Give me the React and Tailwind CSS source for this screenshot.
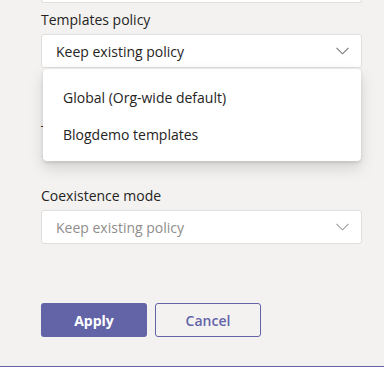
import React from "react";

const font = { fontFamily: '"Open Sans", "Noto Sans", sans-serif' };

function Chevron({ color }) {
  return (
    <svg width="13" height="8" viewBox="0 0 13 8" fill="none">
      <path d="M0.5 0.8 L6.5 6.8 L12.5 0.8" stroke={color} strokeWidth="1.1" />
    </svg>
  );
}

function Select({ value, placeholder, chevron }) {
  return (
    <div className="flex h-[34px] items-center justify-between rounded-[3px] border border-[#e1dfdd] bg-white pl-[14px] pr-[12px]">
      <span className={placeholder ? "text-[14px] text-[#8f8d8b]" : "text-[14px] text-[#252423]"}>{value}</span>
      <Chevron color={chevron} />
    </div>
  );
}

export default function App() {
  return (
    <div className="relative h-[367px] w-[384px] overflow-hidden bg-[#f3f2f1]" style={font}>
      <div className="ml-[41px] w-[321px]">
        {/* bottom of the field above */}
        <div className="h-[3px] rounded-b-[3px] border-x border-b border-[#e1dfdd] bg-white" />

        <div className="relative pt-[7px]">
          <div className="h-[20px] text-[14px] leading-[20px] text-[#252423]">Templates policy</div>
          <div className="mt-[4px]">
            <Select value="Keep existing policy" chevron="#797775" />
          </div>

          {/* field hidden behind the open menu */}
          <div className="mt-[53px] h-[20px] text-[14px] leading-[20px] text-[#252423]">Teams policy</div>
          <div className="h-[16px] border-b border-[#e1dfdd]" />

          {/* open menu */}
          <div className="absolute left-[2px] right-[1px] top-[66px] rounded-[4px] bg-white pb-[8px] pt-[10px] shadow-[0_6.4px_14.4px_rgba(0,0,0,0.13),0_1.2px_3.6px_rgba(0,0,0,0.11)]">
            <div className="flex h-[37px] items-center pl-[20px] text-[14px] text-[#252423]">Global (Org-wide default)</div>
            <div className="flex h-[37px] items-center pl-[20px] text-[14px] text-[#252423]">Blogdemo templates</div>
          </div>
        </div>

        <div className="mt-[29px] h-[20px] text-[14px] leading-[20px] text-[#252423]">Coexistence mode</div>
        <div className="mt-[4px]">
          <Select value="Keep existing policy" placeholder chevron="#a19f9d" />
        </div>

        <div className="mt-[59px] flex gap-[8px]">
          <button className="h-[34px] w-[106px] rounded-[3px] bg-[#6264a7] text-[14px] font-bold text-white">Apply</button>
          <button className="h-[34px] w-[106px] rounded-[3px] border border-[#6264a7] bg-transparent text-[14px] font-semibold text-[#6264a7]">Cancel</button>
        </div>
      </div>
      <div className="absolute bottom-0 left-0 h-[1px] w-full bg-[#6264a7]" />
    </div>
  );
}
